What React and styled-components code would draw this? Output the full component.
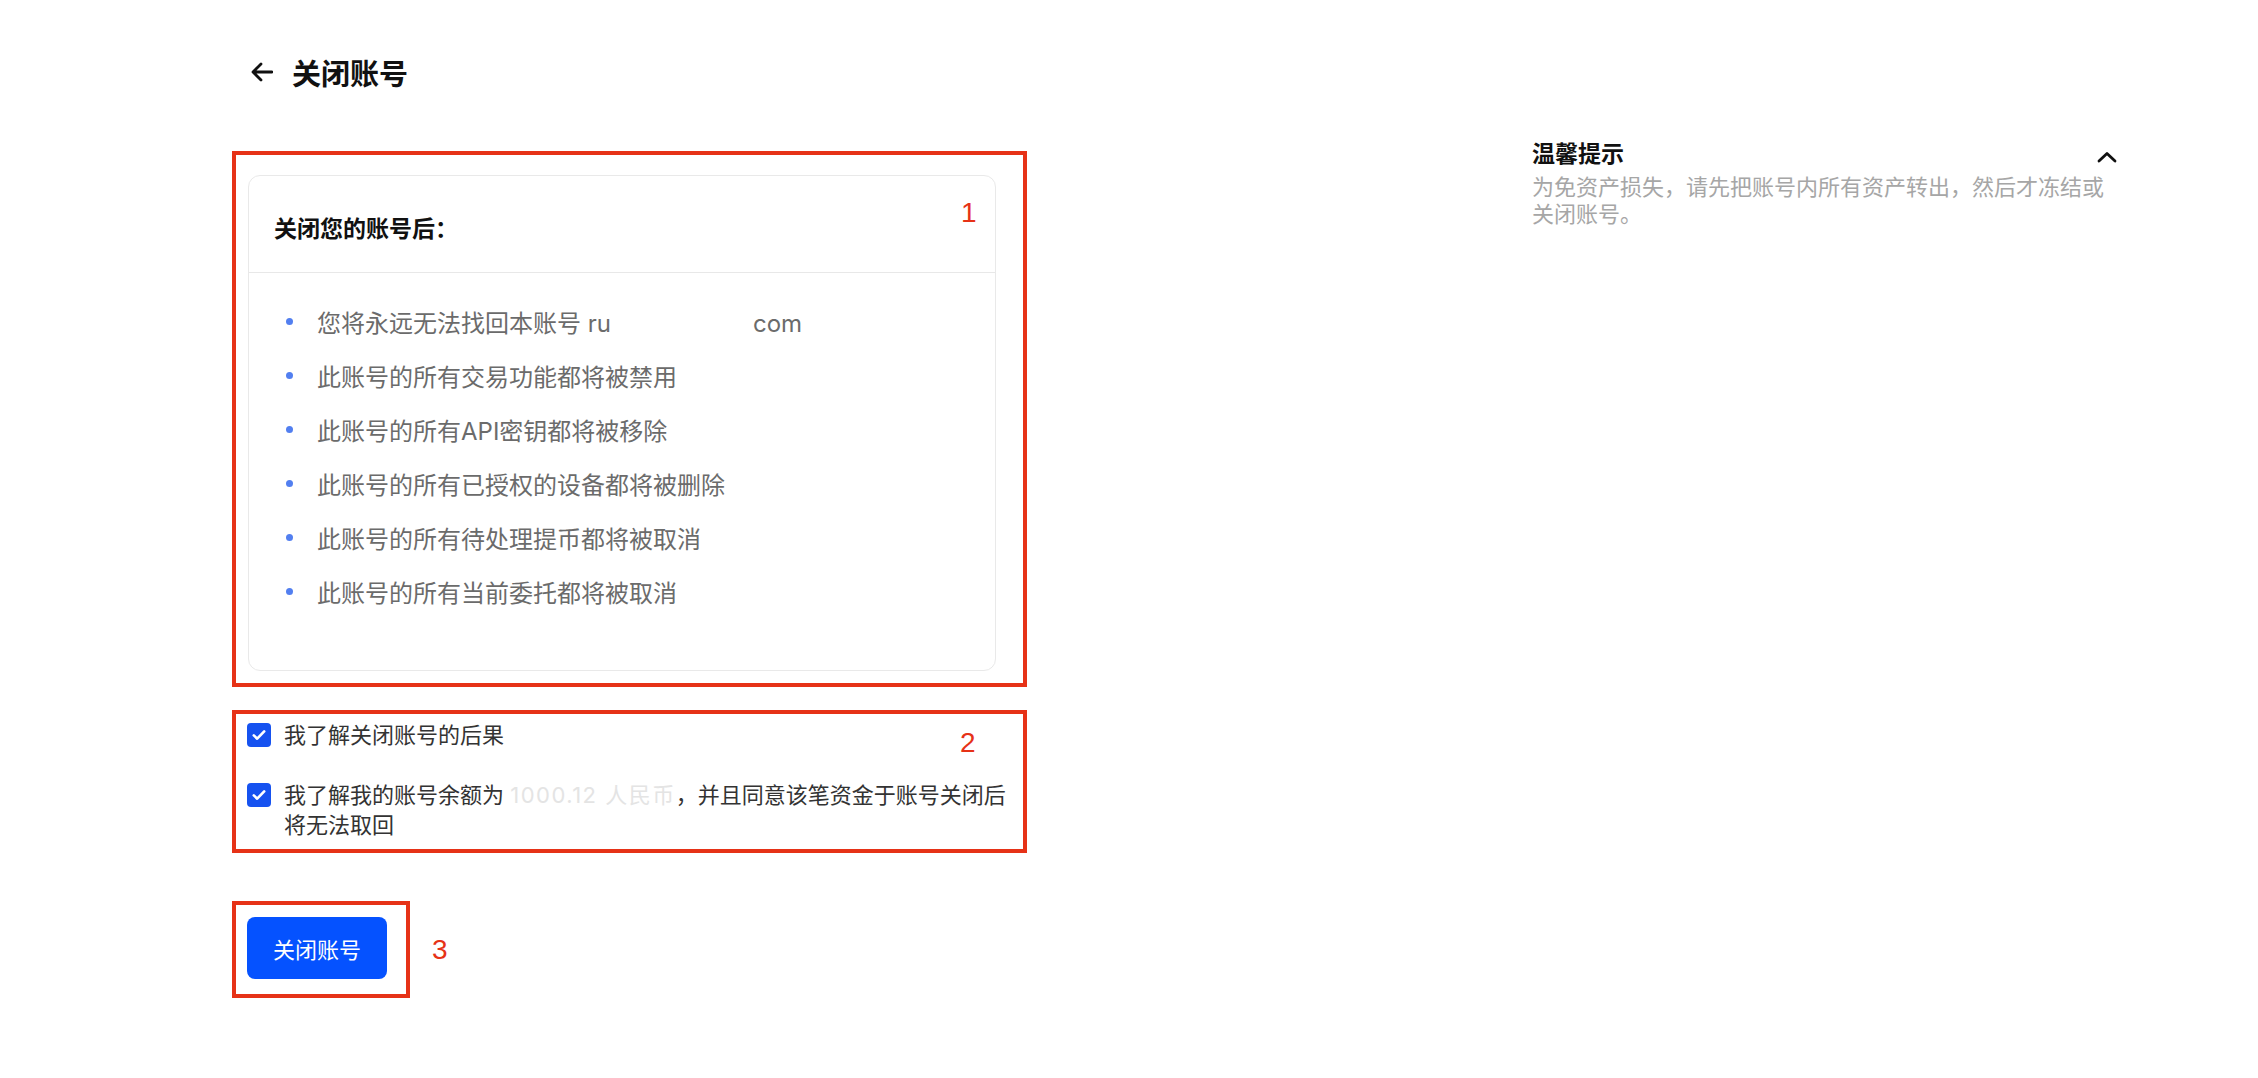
import React from 'react';
import styled, { createGlobalStyle } from 'styled-components';

const GlobalStyle = createGlobalStyle`
  html, body {
    margin: 0;
    padding: 0;
    background: #fff;
  }
  body {
    font-family: Inter, "Noto Sans CJK SC", sans-serif;
    color: #1a1a1a;
  }
  * {
    box-sizing: border-box;
  }
`;

const Page = styled.div`
  display: flex;
  align-items: flex-start;
  gap: 505px;
  padding-left: 232px;
  min-height: 1078px;
`;

const Main = styled.main`
  width: 795px;
  display: flex;
  flex-direction: column;
  align-items: flex-start;
`;

const Header = styled.header`
  display: flex;
  align-items: center;
  gap: 19px;
  height: 40px;
  margin: 52px 0 59px 19px;
  font-size: 29px;
  font-weight: 700;
  color: #111;
`;

const BackButton = styled.button`
  display: flex;
  padding: 0;
  border: none;
  background: none;
  color: #111;
  cursor: pointer;
`;

const Mark = styled.div`
  position: relative;
  border: 4px solid #e63217;
  padding: ${({ $pad }) => $pad};
  width: ${({ $w }) => ($w ? `${$w}px` : 'auto')};
  margin-top: ${({ $mt }) => $mt || 0}px;
`;

const MarkNumber = styled.span`
  position: ${({ $inline }) => ($inline ? 'static' : 'absolute')};
  left: ${({ $x }) => $x}px;
  top: ${({ $y }) => $y}px;
  font-family: "Liberation Sans", Arial, sans-serif;
  font-size: 28px;
  line-height: 28px;
  color: #e63217;
`;

const Card = styled.section`
  border: 1px solid #e9e9e9;
  border-radius: 12px;
  background: #fff;
`;

const CardHead = styled.div`
  display: flex;
  align-items: center;
  height: 97px;
  padding: 5px 25px 0;
  border-bottom: 1px solid #e8e8e8;
  font-size: 23px;
  font-weight: 700;
  color: #111;
`;

const List = styled.ul`
  list-style: none;
  margin: 0;
  padding: 21px 0 52px;
`;

const Item = styled.li`
  display: flex;
  align-items: center;
  gap: 24px;
  height: 54px;
  padding-left: 37px;
  font-size: 24px;
  color: #6b6b6b;
`;

const Dot = styled.span`
  flex: none;
  width: 7px;
  height: 7px;
  border-radius: 50%;
  background: #527ff0;
`;

const Hidden = styled.span`
  display: inline-block;
  width: ${({ $w }) => $w}px;
`;

const Faint = styled.span`
  color: #e4e4e4;
  letter-spacing: 1.5px;
`;

const Checks = styled.div`
  display: flex;
  flex-direction: column;
  gap: 30px;
`;

const CheckRow = styled.label`
  display: flex;
  align-items: flex-start;
  gap: 13px;
  font-size: 22px;
  line-height: 30px;
  color: #333;
`;

const Box = styled.span`
  flex: none;
  display: flex;
  width: 24px;
  height: 24px;
  margin-top: 3px;
  border-radius: 4px;
  background: #1652f0;
`;

const SubmitRow = styled.div`
  display: flex;
  align-items: center;
  gap: 22px;
  margin-top: 48px;
`;

const Submit = styled.button`
  display: flex;
  align-items: center;
  justify-content: center;
  width: 140px;
  height: 62px;
  border: none;
  border-radius: 8px;
  background: #0552ff;
  color: #fff;
  font-family: inherit;
  font-size: 22px;
  cursor: pointer;
`;

const Aside = styled.aside`
  width: 586px;
  margin-top: 137px;
`;

const AsideHead = styled.div`
  display: flex;
  align-items: center;
  justify-content: space-between;
  height: 30px;
  font-size: 23px;
  font-weight: 700;
  color: #111;
`;

const Chevron = styled.svg`
  margin: 9px 1px 0 0;
`;

const Desc = styled.p`
  margin: 7px 0 0;
  font-size: 22px;
  line-height: 27px;
  color: #a6a6a6;
`;

const consequences = [
  '此账号的所有交易功能都将被禁用',
  '此账号的所有API密钥都将被移除',
  '此账号的所有已授权的设备都将被删除',
  '此账号的所有待处理提币都将被取消',
  '此账号的所有当前委托都将被取消',
];

const CheckBox = () => (
  <Box>
    <svg width="24" height="24" viewBox="0 0 24 24" fill="none">
      <path d="M6.8 12.4l3.4 3.3 7-7.3" stroke="#fff" strokeWidth="2.6" strokeLinecap="round" strokeLinejoin="round" />
    </svg>
  </Box>
);

const App = () => (
  <>
    <GlobalStyle />
    <Page>
      <Main>
        <Header>
          <BackButton aria-label="返回">
            <svg width="22" height="20" viewBox="0 0 22 20" fill="none">
              <path d="M21 10H2.5M10 2l-8 8 8 8" stroke="currentColor" strokeWidth="2.8" strokeLinecap="round" strokeLinejoin="round" />
            </svg>
          </BackButton>
          关闭账号
        </Header>

        <Mark $w={795} $pad="20px 27px 12px 12px">
          <Card>
            <CardHead>关闭您的账号后：</CardHead>
            <List>
              <Item>
                <Dot />
                <span>
                  您将永远无法找回本账号 ru<Hidden $w={142} />com
                </span>
              </Item>
              {consequences.map((text) => (
                <Item key={text}>
                  <Dot />
                  <span>{text}</span>
                </Item>
              ))}
            </List>
          </Card>
          <MarkNumber $x={725} $y={44}>1</MarkNumber>
        </Mark>

        <Mark $w={795} $mt={23} $pad="6px 8px 9px 11px">
          <Checks>
            <CheckRow>
              <CheckBox />
              <span>我了解关闭账号的后果</span>
            </CheckRow>
            <CheckRow>
              <CheckBox />
              <span>
                我了解我的账号余额为 <Faint>1000.12 人民币</Faint>，并且同意该笔资金于账号关闭后将无法取回
              </span>
            </CheckRow>
          </Checks>
          <MarkNumber $x={724} $y={15}>2</MarkNumber>
        </Mark>

        <SubmitRow>
          <Mark $pad="12px 19px 15px 11px">
            <Submit>关闭账号</Submit>
          </Mark>
          <MarkNumber $inline>3</MarkNumber>
        </SubmitRow>
      </Main>

      <Aside>
        <AsideHead>
          温馨提示
          <Chevron width="20" height="12" viewBox="0 0 20 12" fill="none">
            <path d="M2 10l8-7.5 8 7.5" stroke="#111" strokeWidth="2.8" strokeLinecap="round" strokeLinejoin="round" />
          </Chevron>
        </AsideHead>
        <Desc>为免资产损失，请先把账号内所有资产转出，然后才冻结或关闭账号。</Desc>
      </Aside>
    </Page>
  </>
);

export default App;
